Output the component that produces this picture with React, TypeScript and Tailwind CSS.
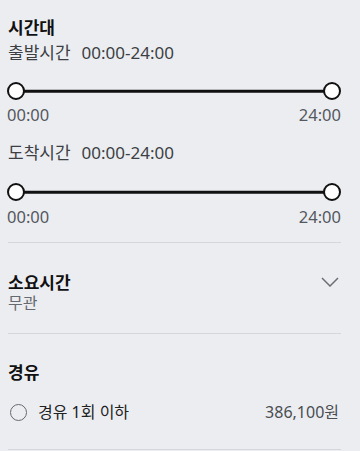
const font = { fontFamily: '"Noto Sans", "Noto Sans CJK KR", sans-serif' }

function RangeSlider({ className = '' }: { className?: string }) {
  return (
    <div className={`relative flex items-center h-[18px] ${className}`}>
      <div className="absolute left-[8px] right-[8px] top-1/2 -translate-y-1/2 h-[2.5px] bg-[#111]" />
      <div className="relative w-[18px] h-[18px] rounded-full border-[2.5px] border-[#111] bg-white" />
      <div className="flex-1" />
      <div className="relative w-[18px] h-[18px] rounded-full border-[2.5px] border-[#111] bg-white" />
    </div>
  )
}

function TimeBlock({ label, first }: { label: string; first?: boolean }) {
  return (
    <>
      <div className={`flex items-center gap-[11px] pl-px text-[17px] leading-[20px] text-[#3d3f44] ${first ? 'mt-[5px]' : 'mt-[18px]'}`}>
        <span>{label}</span>
        <span>00:00-24:00</span>
      </div>
      <RangeSlider className={first ? 'mt-[19px]' : 'mt-[20px]'} />
      <div className={`flex justify-between text-[16.5px] leading-[20px] text-[#55585e] ${first ? 'mt-[5px]' : 'mt-[6px]'}`}>
        <span>00:00</span>
        <span>24:00</span>
      </div>
    </>
  )
}

export default function App() {
  return (
    <div className="w-[360px] h-[451px] overflow-hidden bg-[#ebedf1]" style={font}>
      <div className="pl-[7px] pr-[19px]">
        {/* 시간대 */}
        <section className="pt-[18px]">
          <h3 className="pl-px text-[17px] leading-[20px] font-bold text-[#111]">시간대</h3>
          <TimeBlock label="출발시간" first />
          <TimeBlock label="도착시간" />
          <div className="mt-[15px] ml-px h-px bg-[#d5d7dc]" />
        </section>

        {/* 소요시간 */}
        <section className="pt-[29px] pl-px">
          <div className="flex items-start justify-between">
            <div>
              <h3 className="text-[17px] leading-[21px] font-bold text-[#111]">소요시간</h3>
              <p className="text-[16px] leading-[21px] text-[#66696f]">무관</p>
            </div>
            <svg width="18" height="10" viewBox="0 0 18 10" className="mt-[5px] mr-[2px]">
              <polyline points="1,1 9,9 17,1" fill="none" stroke="#6b6e74" strokeWidth="1.5" />
            </svg>
          </div>
          <div className="mt-[19px] h-px bg-[#d5d7dc]" />
        </section>

        {/* 경유 */}
        <section className="pt-[29px] pl-px">
          <h3 className="text-[17px] leading-[20px] font-bold text-[#111]">경유</h3>
          <label className="mt-[19px] flex items-center justify-between text-[16px] leading-[20px]">
            <span className="flex items-center gap-[11px]">
              <span className="ml-[2px] w-[17px] h-[17px] rounded-full border-[1.5px] border-[#66696f]" />
              <span className="text-[#222]">경유 1회 이하</span>
            </span>
            <span className="mr-[2px] text-[#4a4d52]">386,100원</span>
          </label>
          <div className="mt-[27px] h-px bg-[#d5d7dc]" />
        </section>
      </div>
    </div>
  )
}
